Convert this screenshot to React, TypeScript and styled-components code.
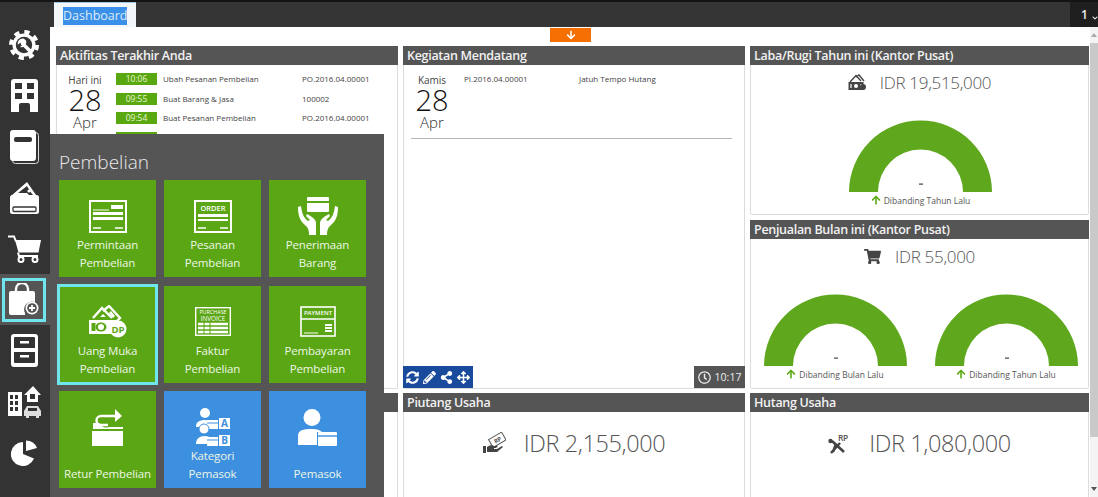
import React from 'react';
import styled, { createGlobalStyle } from 'styled-components';
import {
    FaArrowDown,
    FaArrowUp,
    FaArrowsAlt,
    FaChevronDown,
    FaPencilAlt,
    FaRegClock,
    FaShareAlt,
    FaShoppingCart,
    FaSyncAlt,
} from 'react-icons/fa';

const FONT = '"Open Sans", "Noto Sans", sans-serif';

const GlobalStyle = createGlobalStyle`
    html, body {
        margin: 0;
        padding: 0;
        height: 100%;
        overflow: hidden;
        background: #333;
        font-family: ${FONT};
    }
    * { box-sizing: border-box; }
`;

const Shell = styled.div`
    position: relative;
    width: 1098px;
    height: 497px;
    display: flex;
    border-top: 2px solid #141414;
    background: #333;
    overflow: hidden;
`;

const Sidebar = styled.nav`
    width: 50px;
    flex: none;
    padding-top: 17px;
    background: #333;
`;

const SideItem = styled.div<{ $active?: boolean }>`
    height: 51px;
    display: flex;
    align-items: center;
    padding-left: 2px;
    background: ${({ $active }) => ($active ? '#555' : 'transparent')};
`;

const SideIcon = styled.div<{ $active?: boolean }>`
    width: 44px;
    height: 44px;
    display: flex;
    align-items: center;
    justify-content: center;
    border: 3px solid ${({ $active }) => ($active ? '#6fe6ee' : 'transparent')};
`;

const Main = styled.div`
    flex: 1;
    min-width: 0;
    display: flex;
    flex-direction: column;
`;

const TopBar = styled.div`
    height: 25px;
    flex: none;
    display: flex;
    justify-content: space-between;
    padding-left: 4px;
    background: #353536;
`;

const Tab = styled.div`
    width: 82px;
    height: 25px;
    padding: 4px 0 0 9px;
    background: #f3f7fa;
    border-top: 1px solid #9cc9ea;
`;

const TabLabel = styled.span`
    display: block;
    width: 64px;
    height: 18px;
    line-height: 18px;
    font-size: 12.5px;
    white-space: nowrap;
    color: #dcecf8;
    background: #3a8fe8;
`;

const PageSwitch = styled.div`
    width: 28px;
    display: flex;
    align-items: center;
    padding-left: 11px;
    gap: 4px;
    font-size: 12px;
    font-weight: 600;
    color: #eee;
    background: #1f1f1f;
`;

const Content = styled.div`
    flex: 1;
    min-height: 0;
    display: flex;
    background: #fff;
    overflow: hidden;
`;

const Canvas = styled.div`
    flex: 1;
    min-width: 0;
    padding: 19px 1px 0 6px;
    position: relative;
`;

const PullTab = styled.div`
    position: absolute;
    top: 1px;
    left: 500px;
    width: 41px;
    height: 14px;
    display: flex;
    align-items: center;
    justify-content: center;
    color: #fff;
    font-size: 10px;
    background: #f56f02;
`;

const Board = styled.div`
    display: grid;
    grid-template-columns: 342px 342px 339px;
    grid-template-rows: 343px 150px;
    column-gap: 5px;
    row-gap: 4px;
`;

const Stack = styled.div`
    display: flex;
    flex-direction: column;
    gap: 5px;
    min-height: 0;
`;

const Panel = styled.section<{ $fill?: boolean }>`
    display: flex;
    flex-direction: column;
    border: 1px solid #dcdcdc;
    border-top: 0;
    border-radius: 2px;
    background: #fff;
    flex: ${({ $fill }) => ($fill ? '1' : 'none')};
    min-height: 0;
`;

const PanelTitle = styled.h2`
    margin: 0 -1px;
    height: 19px;
    flex: none;
    padding-left: 4px;
    line-height: 19px;
    font-size: 12.5px;
    font-weight: 600;
    letter-spacing: -0.3px;
    color: #f2f2f2;
    white-space: nowrap;
    background: #555;
`;

const PanelBody = styled.div`
    flex: 1;
    min-height: 0;
`;

const AgendaRow = styled.div`
    display: flex;
    padding-top: 8px;
`;

const DateBlock = styled.div`
    width: 56px;
    flex: none;
    text-align: center;
    color: #333;
    font-weight: 300;
`;

const DateLabel = styled.div`
    height: 14px;
    line-height: 14px;
    font-size: 10px;
    font-weight: 400;
    color: #444;
`;

const DateDay = styled.div`
    height: 26px;
    line-height: 26px;
    font-size: 29px;
    color: #111;
`;

const DateMonth = styled.div`
    height: 18px;
    line-height: 18px;
    font-size: 15px;
    color: #333;
`;

const ActivityList = styled.div`
    margin-left: 3px;
`;

const ActivityRow = styled.div`
    height: 19.5px;
    display: flex;
    align-items: flex-start;
    font-size: 8px;
    line-height: 12px;
    color: #444;
    white-space: nowrap;
`;

const TimeBadge = styled.span`
    width: 41px;
    height: 12px;
    flex: none;
    margin-right: 6px;
    text-align: center;
    font-size: 8.5px;
    color: #e8f5d8;
    background: #5aa80f;
`;

const ActivityName = styled.span`
    width: 139px;
    flex: none;
`;

const UpcomingCode = styled.span`
    width: 115px;
    margin-left: 4px;
    font-size: 8px;
    line-height: 12px;
    color: #444;
`;

const UpcomingName = styled.span`
    font-size: 8px;
    line-height: 12px;
    color: #444;
`;

const Divider = styled.hr`
    margin: 7px 12px 0 7px;
    border: 0;
    border-top: 1px solid #b5b5b5;
`;

const PanelFooter = styled.div`
    height: 22px;
    flex: none;
    display: flex;
    justify-content: space-between;
    margin: 0 -1px;
`;

const ToolStrip = styled.div`
    width: 70px;
    display: flex;
    align-items: center;
    justify-content: center;
    gap: 4px;
    font-size: 13px;
    color: #fff;
    background: #1a4a9c;
`;

const ClockBadge = styled.div`
    width: 51px;
    display: flex;
    align-items: center;
    justify-content: center;
    gap: 4px;
    font-size: 10.5px;
    color: #eee;
    background: #555;

    svg {
        font-size: 13px;
    }
`;

const Kpi = styled.div<{ $big?: boolean }>`
    height: 34px;
    display: flex;
    align-items: center;
    justify-content: center;
    gap: ${({ $big }) => ($big ? '18px' : '14px')};
    margin-top: ${({ $big }) => ($big ? '14px' : '0')};
    font-size: ${({ $big }) => ($big ? '23.5px' : '17px')};
    letter-spacing: ${({ $big }) => ($big ? '-0.4px' : '-0.3px')};
    font-weight: 300;
    color: #555;
`;

const GaugeRow = styled.div`
    display: flex;
    justify-content: center;
    gap: 28px;
    margin-top: 21px;
    padding-left: 2px;
`;

const GaugeCell = styled.div`
    width: 143px;
`;

const GaugeLegend = styled.div`
    height: 14px;
    display: flex;
    align-items: center;
    justify-content: center;
    gap: 3px;
    margin-top: 1px;
    font-size: 8.5px;
    color: #555;
    white-space: nowrap;

    svg {
        color: #5aa80f;
        font-size: 10px;
    }
`;

const ScrollTrack = styled.div`
    width: 8px;
    flex: none;
    display: flex;
    flex-direction: column;
    justify-content: space-between;
    background: #f4f4f4;
`;

const ScrollArrow = styled.div<{ $down?: boolean }>`
    height: 16px;
    display: flex;
    justify-content: center;
    align-items: center;

    &::before {
        content: '';
        border-left: 3px solid transparent;
        border-right: 3px solid transparent;
        ${({ $down }) => ($down ? 'border-top: 4px solid #555;' : 'border-bottom: 4px solid #aaa;')}
    }
`;

const ScrollThumb = styled.div`
    height: 397px;
    margin-bottom: 44px;
    background: #c9c9c9;
`;

const Flyout = styled.div`
    position: absolute;
    left: 50px;
    top: 132px;
    width: 334px;
    height: 363px;
    padding: 15px 0 0 9px;
    background: #555;
`;

const FlyoutTitle = styled.h3`
    margin: 0 0 4px;
    height: 27px;
    line-height: 27px;
    font-size: 19px;
    font-weight: 300;
    color: #eaeaea;
`;

const TileGrid = styled.div`
    display: grid;
    grid-template-columns: repeat(3, 97px);
    grid-auto-rows: 97px;
    column-gap: 8px;
    row-gap: 8.5px;
`;

const Tile = styled.div<{ $blue?: boolean; $selected?: boolean }>`
    display: flex;
    flex-direction: column;
    align-items: center;
    padding: 16px 0 5px;
    text-align: center;
    background: ${({ $blue }) => ($blue ? '#3d8fe0' : '#5aa614')};
    outline: ${({ $selected }) => ($selected ? '3px solid #6fe6ee' : 'none')};
    outline-offset: -1.5px;
`;

const TileIcon = styled.div`
    height: 40px;
    flex: none;
    display: flex;
    align-items: center;
    justify-content: center;
`;

const TileLabel = styled.div`
    margin-top: auto;
    font-size: 11.5px;
    letter-spacing: -0.15px;
    line-height: 18px;
    color: #eef6e6;
    white-space: pre-line;
`;

const sideIcons: React.ReactNode[] = [
    <svg key="gear" width="30" height="30" viewBox="0 0 30 30">
        <circle cx="15" cy="15" r="11.5" fill="#fff" />
        <circle cx="15" cy="15" r="13" fill="none" stroke="#fff" strokeWidth="4" strokeDasharray="5.2 5" />
        <circle cx="15" cy="15" r="8.2" fill="#333" />
        <path d="M13.5 13.5 20.5 20.5" stroke="#fff" strokeWidth="3.6" strokeLinecap="round" />
        <path d="M15 8.8a5 5 0 0 0-6.2 6.2L11 12.8l2 .2.2 2-2.2 2a5 5 0 0 0 6.2-6.2Z" fill="#fff" />
    </svg>,
    <svg key="building" width="27" height="33" viewBox="0 0 27 33">
        <path
            fillRule="evenodd"
            fill="#fff"
            d="M3 0h21a3 3 0 0 1 3 3v30h-8v-7a2 2 0 0 0-2-2h-7a2 2 0 0 0-2 2v7H0V3a3 3 0 0 1 3-3ZM4 4v6h7V4H4Zm12 0v6h7V4h-7ZM4 14v6h7v-6H4Zm12 0v6h7v-6h-7Z"
        />
    </svg>,
    <svg key="book" width="29" height="34" viewBox="0 0 29 34">
        <rect x="2.5" y="2.5" width="26" height="31" rx="3" fill="none" stroke="#ddd" strokeWidth="1" />
        <rect x="0" y="0" width="26" height="31" rx="3" fill="#fff" />
        <rect x="4" y="7" width="18" height="5" rx="2" fill="#333" />
    </svg>,
    <svg key="wallet" width="29" height="33" viewBox="0 0 29 33">
        <path d="M1 15 17 1l9 13H23l-5-6-3 2 4 4H1Z" fill="#fff" />
        <path d="M8 12 17 5l4 7Z" fill="#333" />
        <circle cx="19" cy="10" r="1.6" fill="#fff" />
        <rect x="0" y="14" width="29" height="19" rx="2.5" fill="#fff" />
        <rect x="3" y="26" width="23" height="4.5" rx="1" fill="none" stroke="#333" strokeWidth="1.3" />
    </svg>,
    <svg key="cart" width="33" height="28" viewBox="0 0 33 28">
        <path d="M0 1.5h6l2 5" fill="none" stroke="#fff" strokeWidth="2" />
        <path d="M7 5h26l-2.5 12.5H10.5Z" fill="#fff" />
        <path d="M10 17.5 11 21h19" fill="none" stroke="#fff" strokeWidth="2" />
        <circle cx="13" cy="24.5" r="2.5" fill="none" stroke="#fff" strokeWidth="2" />
        <circle cx="27" cy="24.5" r="2.5" fill="none" stroke="#fff" strokeWidth="2" />
    </svg>,
    <svg key="bag" width="30" height="33" viewBox="0 0 30 33">
        <path d="M7 8V6a6 6 0 0 1 12 0v2" fill="none" stroke="#fff" strokeWidth="2.4" />
        <path d="M2 8h22a2 2 0 0 1 2 2v9a8 8 0 0 0-10 11v2H2a2 2 0 0 1-2-2V10a2 2 0 0 1 2-2Z" fill="#fff" />
        <circle cx="23" cy="25" r="6.5" fill="#fff" />
        <circle cx="23" cy="25" r="4.8" fill="#555" />
        <path d="M23 22v6M20 25h6" stroke="#fff" strokeWidth="1.8" />
    </svg>,
    <svg key="cabinet" width="27" height="33" viewBox="0 0 27 33">
        <path
            fillRule="evenodd"
            fill="#fff"
            d="M3 0h21a3 3 0 0 1 3 3v27a3 3 0 0 1-3 3H3a3 3 0 0 1-3-3V3a3 3 0 0 1 3-3Zm1 3a1 1 0 0 0-1 1v10h21V4a1 1 0 0 0-1-1H4ZM3 18v10a1 1 0 0 0 1 1h19a1 1 0 0 0 1-1V18H3Z"
        />
        <rect x="9" y="7" width="9" height="2.5" fill="#fff" />
        <rect x="9" y="21" width="9" height="2.5" fill="#fff" />
    </svg>,
    <svg key="city" width="33" height="33" viewBox="0 0 33 33">
        <path
            fillRule="evenodd"
            fill="#fff"
            d="M0 7h14v24H0V7Zm2 3v4h3v-4H2Zm5 0v4h3v-4H7Zm-5 6v4h3v-4H2Zm5 0v4h3v-4H7Zm-5 6v4h3v-4H2Zm5 0v4h3v-4H7Z"
        />
        <path d="M16 10 25 1l8 9h-3v7H19v-7h-3Z" fill="#fff" />
        <rect x="22" y="9" width="5" height="5" fill="#333" />
        <path d="M19 21h11l3 5v5h-2v2h-3v-2h-7v2h-3v-2h-2v-5l3-5Z" fill="#ddd" />
        <rect x="20" y="23" width="9" height="3" fill="#333" />
    </svg>,
    <svg key="pie" width="26" height="27" viewBox="0 0 26 27">
        <path d="M12 3V15L23 19.5A12 12 0 1 1 12 3Z" fill="#fff" />
        <path d="M15 12V1.5A12 12 0 0 1 26 9Z" fill="#fff" />
    </svg>,
];

const Bill = ({ children }: { children?: React.ReactNode }): JSX.Element => (
    <svg width="38" height="33" viewBox="0 0 38 33">
        <rect x="1" y="1" width="36" height="31" fill="none" stroke="#fff" strokeWidth="2" />
        {children}
        <path d="M4 28h8M26 28h8" stroke="#fff" strokeWidth="1.5" />
    </svg>
);

const tiles: { label: string; blue?: boolean; selected?: boolean; icon: React.ReactNode }[] = [
    {
        label: 'Permintaan\nPembelian',
        icon: (
            <Bill>
                <rect x="22" y="5" width="12" height="4" fill="#fff" />
                <rect x="4" y="12" width="30" height="3" fill="#fff" />
                <rect x="4" y="17" width="30" height="3" fill="#fff" />
                <path d="M4 10h16" stroke="#fff" strokeWidth="1" />
            </Bill>
        ),
    },
    {
        label: 'Pesanan\nPembelian',
        icon: (
            <Bill>
                <text x="19" y="11" textAnchor="middle" fontSize="7.5" fontWeight="600" fontFamily={FONT} fill="#fff">
                    ORDER
                </text>
                <rect x="4" y="14" width="30" height="3" fill="#fff" />
                <rect x="4" y="19" width="30" height="2" fill="#fff" />
            </Bill>
        ),
    },
    {
        label: 'Penerimaan\nBarang',
        icon: (
            <svg width="40" height="38" viewBox="0 0 40 38">
                <rect x="9" y="0" width="22" height="15" rx="1" fill="#fff" />
                <rect x="9" y="4" width="22" height="2" fill="#5aa614" />
                <path d="M3 9 0 10c0 9 2 14 8 19 2 2 3 4 3 9h7V26c0-3-3-6-9-9l-1 2 4 4-2 1c-4-3-6-7-7-15Z" fill="#fff" />
                <path d="m37 9 3 1c0 9-2 14-8 19-2 2-3 4-3 9h-7V26c0-3 3-6 9-9l1 2-4 4 2 1c4-3 6-7 7-15Z" fill="#fff" />
            </svg>
        ),
    },
    {
        label: 'Uang Muka\nPembelian',
        selected: true,
        icon: (
            <svg width="38" height="33" viewBox="0 0 38 33">
                <path d="M4 13 13 3l10 10" fill="none" stroke="#fff" strokeWidth="2.4" />
                <path d="M14 6 20 1l11 12-3 3" fill="none" stroke="#fff" strokeWidth="2.4" />
                <path d="M11 12l3-3 3 3ZM20 8l2-2 4 5-2 2Z" fill="#fff" />
                <rect x="0" y="15" width="28" height="14" fill="#fff" />
                <ellipse cx="12" cy="22" rx="5.5" ry="4.5" fill="#5aa614" />
                <circle cx="12" cy="22" r="3" fill="#fff" />
                <rect x="2.5" y="18" width="4" height="8" fill="#5aa614" />
                <circle cx="29" cy="24" r="8.5" fill="#fff" />
                <text x="29" y="27.5" textAnchor="middle" fontSize="9.5" fontWeight="700" fontFamily={FONT} fill="#5aa614">
                    DP
                </text>
            </svg>
        ),
    },
    {
        label: 'Faktur\nPembelian',
        icon: (
            <svg width="36" height="29" viewBox="0 0 36 29">
                <rect x="0.7" y="0.7" width="34.6" height="27.6" fill="none" stroke="#fff" strokeWidth="1.4" />
                <text x="18" y="7" textAnchor="middle" fontSize="5.4" fontFamily={FONT} fill="#fff">
                    PURCHASE
                </text>
                <text x="18" y="14" textAnchor="middle" fontSize="6.4" fontFamily={FONT} fill="#fff">
                    INVOICE
                </text>
                <path d="M3 17h30M3 21h30M3 25h30" stroke="#fff" strokeWidth="2.4" />
                <path d="M9 15v12M15 15v12" stroke="#5aa614" strokeWidth="1" />
            </svg>
        ),
    },
    {
        label: 'Pembayaran\nPembelian',
        icon: (
            <svg width="36" height="31" viewBox="0 0 36 31">
                <rect x="1" y="1" width="34" height="29" fill="none" stroke="#fff" strokeWidth="1.6" />
                <text x="18" y="9" textAnchor="middle" fontSize="6" fontWeight="600" fontFamily={FONT} fill="#fff">
                    PAYMENT
                </text>
                <path d="M1 13h34" stroke="#fff" strokeWidth="1.4" />
                <path d="M4 27h14" stroke="#fff" strokeWidth="1" />
                <path d="M25 19h7M25 22h7M25 25h7" stroke="#fff" strokeWidth="2" />
            </svg>
        ),
    },
    {
        label: 'Retur Pembelian',
        icon: (
            <svg width="31" height="37" viewBox="0 0 31 37">
                <path d="M25 7H9a4 4 0 0 0 0 9h7" fill="none" stroke="#fff" strokeWidth="2.4" />
                <path d="m23 0 7 7-7 6Z" fill="#fff" />
                <path d="M1 14h6a8 8 0 0 0 10 4h14v2H1Z" fill="#fff" />
                <rect x="0" y="22" width="31" height="15" fill="#fff" />
            </svg>
        ),
    },
    {
        label: 'Kategori\nPemasok',
        blue: true,
        icon: (
            <svg width="34" height="40" viewBox="0 0 34 40">
                <circle cx="9" cy="6" r="5" fill="#fff" />
                <path d="M0 20c0-5 3-7 9-7 3 0 5 1 6 2v5Z" fill="#fff" />
                <rect x="11" y="13" width="11" height="9" fill="#fff" />
                <path d="M11 16h11" stroke="#3d8fe0" strokeWidth="1" />
                <rect x="23" y="11" width="11" height="11" fill="#fff" />
                <text x="28.5" y="20" textAnchor="middle" fontSize="10" fontWeight="700" fontFamily={FONT} fill="#3d8fe0">
                    A
                </text>
                <circle cx="8" cy="22" r="5" fill="#fff" stroke="#3d8fe0" />
                <path d="M0 37c0-5 3-8 9-8 3 0 5 1 6 2v6Z" fill="#fff" />
                <rect x="11" y="30" width="11" height="9" fill="#fff" />
                <path d="M11 33h11" stroke="#3d8fe0" strokeWidth="1" />
                <rect x="23" y="28" width="11" height="11" fill="#fff" />
                <text x="28.5" y="37" textAnchor="middle" fontSize="10" fontWeight="700" fontFamily={FONT} fill="#3d8fe0">
                    B
                </text>
            </svg>
        ),
    },
    {
        label: 'Pemasok',
        blue: true,
        icon: (
            <svg width="39" height="37" viewBox="0 0 39 37">
                <circle cx="14" cy="8.5" r="8.5" fill="#fff" />
                <path d="M0 36V27c0-6 5-7 14-7 5 0 8 1 10 3h-5v13Z" fill="#fff" />
                <rect x="20" y="23" width="19" height="14" rx="1" fill="#fff" />
                <path d="M20 27h19" stroke="#3d8fe0" strokeWidth="1.4" />
            </svg>
        ),
    },
];

const MoneyIcon = (): JSX.Element => (
    <svg width="18" height="17" viewBox="0 0 18 17">
        <path d="M2 8 8 1.5l5 5.5M8 3l3-2 5 6" fill="none" stroke="#444" strokeWidth="1.4" />
        <rect x="0.5" y="8" width="15" height="8" fill="#444" />
        <circle cx="8" cy="12" r="2" fill="#fff" />
        <path d="M3 10v4M13 10v4" stroke="#fff" strokeWidth="1.2" />
        <circle cx="15" cy="13" r="3" fill="#444" />
    </svg>
);

const ReceiveIcon = (): JSX.Element => (
    <svg width="23" height="22" viewBox="0 0 23 22">
        <g transform="rotate(-30 15 8)">
            <rect x="7" y="3" width="15" height="9" fill="#fff" stroke="#555" strokeWidth="1" />
            <text x="14.5" y="10" textAnchor="middle" fontSize="6" fontWeight="700" fontFamily={FONT} fill="#555">
                RP
            </text>
        </g>
        <path d="M0 14h3v7H0ZM4 15c3-2 5-2 7-1h4l-2 2h-2v1h3l5-3 1 1-6 5H4Z" fill="#444" />
    </svg>
);

const RunnerIcon = (): JSX.Element => (
    <svg width="23" height="22" viewBox="0 0 23 22">
        <circle cx="2.5" cy="9" r="2.2" fill="#444" />
        <path d="M4 9 16 20M12 11 3 21M8 12 5 20" stroke="#444" strokeWidth="2.6" fill="none" />
        <text x="15" y="8.5" textAnchor="middle" fontSize="8.5" fontWeight="600" fontFamily={FONT} fill="#555">
            RP
        </text>
    </svg>
);

function Gauge({ legend }: { legend: string }): JSX.Element {
    return (
        <GaugeCell>
            <svg width="143" height="72" viewBox="0 0 143 72" style={{ display: 'block' }}>
                <path d="M0 72a71.5 71.5 0 0 1 143 0h-29a42.5 42.5 0 0 0-85 0Z" fill="#5fa81e" />
                <rect x="70" y="63.5" width="4" height="1.2" fill="#444" />
            </svg>
            <GaugeLegend>
                <FaArrowUp />
                {legend}
            </GaugeLegend>
        </GaugeCell>
    );
}

function DateColumn({ label, day, month }: { label: string; day: string; month: string }): JSX.Element {
    return (
        <DateBlock>
            <DateLabel>{label}</DateLabel>
            <DateDay>{day}</DateDay>
            <DateMonth>{month}</DateMonth>
        </DateBlock>
    );
}

const activities = [
    { time: '10:06', name: 'Ubah Pesanan Pembelian', code: 'PO.2016.04.00001' },
    { time: '09:55', name: 'Buat Barang & Jasa', code: '100002' },
    { time: '09:54', name: 'Buat Pesanan Pembelian', code: 'PO.2016.04.00001' },
    { time: '', name: '', code: '' },
];

export default function App(): JSX.Element {
    return (
        <>
            <GlobalStyle />
            <Shell>
                <Sidebar>
                    {sideIcons.map((icon, i) => (
                        <SideItem key={i} $active={i === 5}>
                            <SideIcon $active={i === 5}>{icon}</SideIcon>
                        </SideItem>
                    ))}
                </Sidebar>
                <Main>
                    <TopBar>
                        <Tab>
                            <TabLabel>Dashboard</TabLabel>
                        </Tab>
                        <PageSwitch>
                            1
                            <FaChevronDown style={{ fontSize: '6px', marginTop: '6px' }} />
                        </PageSwitch>
                    </TopBar>
                    <Content>
                        <Canvas>
                            <PullTab>
                                <FaArrowDown />
                            </PullTab>
                            <Board>
                                <Panel>
                                    <PanelTitle>Aktifitas Terakhir Anda</PanelTitle>
                                    <PanelBody>
                                        <AgendaRow>
                                            <DateColumn label="Hari ini" day="28" month="Apr" />
                                            <ActivityList>
                                                {activities.map((a, i) => (
                                                    <ActivityRow key={i}>
                                                        <TimeBadge>{a.time}</TimeBadge>
                                                        <ActivityName>{a.name}</ActivityName>
                                                        {a.code}
                                                    </ActivityRow>
                                                ))}
                                            </ActivityList>
                                        </AgendaRow>
                                    </PanelBody>
                                </Panel>
                                <Panel>
                                    <PanelTitle>Kegiatan Mendatang</PanelTitle>
                                    <PanelBody>
                                        <AgendaRow>
                                            <DateColumn label="Kamis" day="28" month="Apr" />
                                            <UpcomingCode>PI.2016.04.00001</UpcomingCode>
                                            <UpcomingName>Jatuh Tempo Hutang</UpcomingName>
                                        </AgendaRow>
                                        <Divider />
                                    </PanelBody>
                                    <PanelFooter>
                                        <ToolStrip>
                                            <FaSyncAlt />
                                            <FaPencilAlt />
                                            <FaShareAlt />
                                            <FaArrowsAlt />
                                        </ToolStrip>
                                        <ClockBadge>
                                            <FaRegClock />
                                            10:17
                                        </ClockBadge>
                                    </PanelFooter>
                                </Panel>
                                <Stack>
                                    <Panel $fill>
                                        <PanelTitle>Laba/Rugi Tahun ini (Kantor Pusat)</PanelTitle>
                                        <PanelBody>
                                            <Kpi>
                                                <MoneyIcon />
                                                IDR 19,515,000
                                            </Kpi>
                                            <GaugeRow>
                                                <Gauge legend="Dibanding Tahun Lalu" />
                                            </GaugeRow>
                                        </PanelBody>
                                    </Panel>
                                    <Panel $fill>
                                        <PanelTitle>Penjualan Bulan ini (Kantor Pusat)</PanelTitle>
                                        <PanelBody>
                                            <Kpi>
                                                <FaShoppingCart style={{ fontSize: '17px', color: '#444' }} />
                                                IDR 55,000
                                            </Kpi>
                                            <GaugeRow>
                                                <Gauge legend="Dibanding Bulan Lalu" />
                                                <Gauge legend="Dibanding Tahun Lalu" />
                                            </GaugeRow>
                                        </PanelBody>
                                    </Panel>
                                </Stack>
                                <Panel>
                                    <PanelTitle />
                                </Panel>
                                <Panel>
                                    <PanelTitle>Piutang Usaha</PanelTitle>
                                    <PanelBody>
                                        <Kpi $big>
                                            <ReceiveIcon />
                                            IDR 2,155,000
                                        </Kpi>
                                    </PanelBody>
                                </Panel>
                                <Panel>
                                    <PanelTitle>Hutang Usaha</PanelTitle>
                                    <PanelBody>
                                        <Kpi $big>
                                            <RunnerIcon />
                                            IDR 1,080,000
                                        </Kpi>
                                    </PanelBody>
                                </Panel>
                            </Board>
                        </Canvas>
                        <ScrollTrack>
                            <ScrollArrow />
                            <ScrollThumb />
                            <ScrollArrow $down />
                        </ScrollTrack>
                    </Content>
                </Main>
                <Flyout>
                    <FlyoutTitle>Pembelian</FlyoutTitle>
                    <TileGrid>
                        {tiles.map((t) => (
                            <Tile key={t.label} $blue={t.blue} $selected={t.selected}>
                                <TileIcon>{t.icon}</TileIcon>
                                <TileLabel>{t.label}</TileLabel>
                            </Tile>
                        ))}
                    </TileGrid>
                </Flyout>
            </Shell>
        </>
    );
}
